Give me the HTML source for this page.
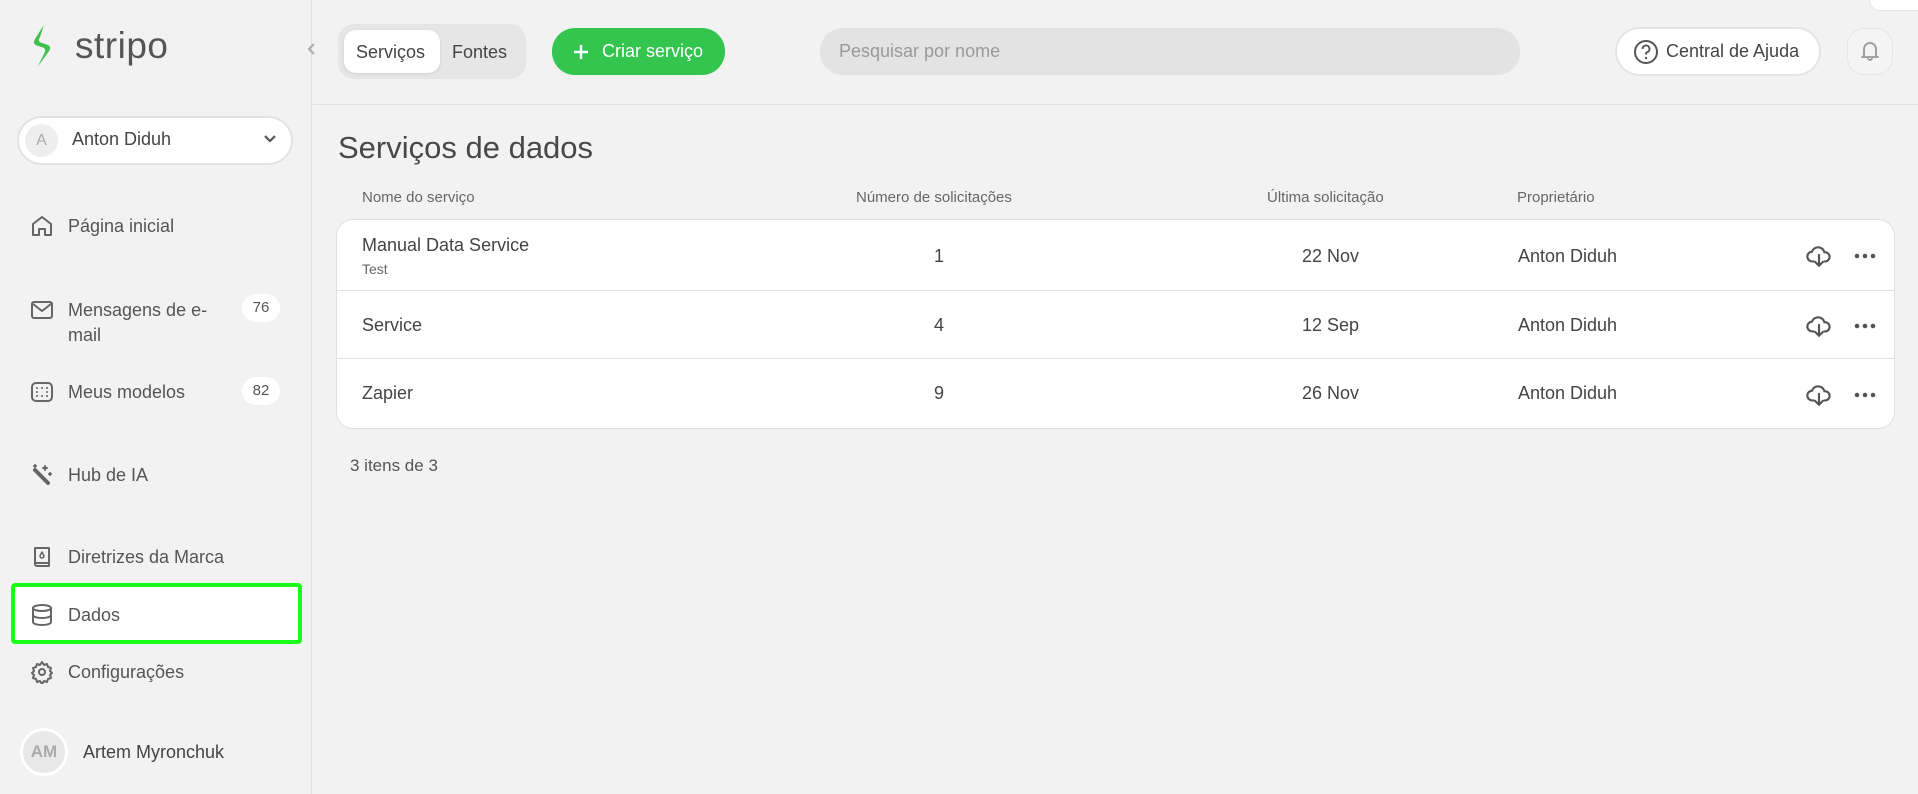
<!DOCTYPE html>
<html><head><meta charset="utf-8"><style>
*{box-sizing:border-box;margin:0;padding:0}
body{width:1918px;height:794px;background:#f2f2f2;font-family:"Liberation Sans",sans-serif;color:#505050;position:relative;overflow:hidden}
.abs{position:absolute}
.side{left:0;top:0;width:312px;height:794px;border-right:1px solid #e0e0e0}
.nav{position:absolute;left:30px;display:flex;align-items:center;font-size:18px;color:#555}
.nav svg{width:24px;height:24px;margin-right:14px;fill:none;stroke:#666;stroke-width:2;stroke-linecap:round;stroke-linejoin:round}
.badge{position:absolute;left:242px;width:38px;height:28px;border-radius:14px;background:#fff;font-size:15px;text-align:center;line-height:28px;color:#555}
.th{position:absolute;top:189px;font-size:15px;color:#666}
.row{position:absolute;left:0;right:0;font-size:18px;color:#444}
.row span{position:absolute}
</style></head><body>
<div class="abs side">
  <svg class="abs" style="left:31px;top:24px" width="22" height="44" viewBox="0 0 24 46"><path d="M14 0 L4 16 Q1 21 8 23 L14 25 Q17 27 14 32 L7 46 L20 28 Q23 23 16 21 L10 19 Q7 17 10 13 Z" fill="#3fc24c"/></svg>
  <div class="abs" style="left:75px;top:26px;font-size:37px;color:#555;letter-spacing:0.5px;line-height:40px">stripo</div>
  <div class="abs" style="left:19px;top:118px;width:272px;height:45px;border-radius:23px;background:#fff;box-shadow:0 0 0 2px #e2e2e2"></div>
  <div class="abs" style="left:25px;top:124px;width:33px;height:33px;border-radius:50%;background:#eee;color:#aaa;font-size:16px;text-align:center;line-height:33px">A</div>
  <div class="abs" style="left:72px;top:129px;font-size:18px;color:#444">Anton Diduh</div>
  <svg class="abs" style="left:263px;top:134px" width="14" height="10" viewBox="0 0 14 10"><path d="M2 2l5 5 5-5" stroke="#555" stroke-width="2.2" fill="none"/></svg>

  <div class="nav" style="top:214px"><svg viewBox="0 0 24 24"><path d="M3 21V10l9-7 9 7v11h-6v-6h-6v6z"/></svg>Página inicial</div>
  <div class="nav" style="top:298px;align-items:flex-start;line-height:25px"><svg viewBox="0 0 24 24"><rect x="2" y="4" width="20" height="16" rx="2"/><path d="M3 6l9 7 9-7"/></svg>Mensagens de e-<br>mail</div>
  <div class="badge" style="top:294px">76</div>
  <div class="nav" style="top:380px"><svg viewBox="0 0 24 24"><rect x="2" y="3" width="20" height="18" rx="4"/><path d="M7 8h.01M12 8h.01M17 8h.01M7 16h.01M12 16h.01M17 16h.01M7 12h.01M17 12h.01"/></svg>Meus modelos</div>
  <div class="badge" style="top:377px">82</div>
  <div class="nav" style="top:463px"><svg viewBox="0 0 24 24"><path d="M5 7l13 13" stroke-width="4"/><path d="M15 3v4M13 5h4M5 2v2M4 3h2M20 10v2M19 11h2"/></svg>Hub de IA</div>
  <div class="nav" style="top:545px"><svg viewBox="0 0 24 24"><path d="M5 3h14v18H7a2 2 0 0 1-2-2z"/><path d="M5 18h14"/><path d="M12 7l-2 4a2 2 0 1 0 4 0z" stroke-width="1.5"/></svg>Diretrizes da Marca</div>
  <div class="abs" style="left:11px;top:583px;width:291px;height:61px;border:4px solid #1aff1a;border-radius:4px;background:#fff"></div>
  <div class="nav" style="top:603px"><svg viewBox="0 0 24 24"><ellipse cx="12" cy="5" rx="9" ry="3"/><path d="M3 5v14c0 1.7 4 3 9 3s9-1.3 9-3V5M3 12c0 1.7 4 3 9 3s9-1.3 9-3"/></svg>Dados</div>
  <div class="nav" style="top:660px"><svg viewBox="0 0 24 24"><circle cx="12" cy="12" r="3"/><path d="M12 2l2 3 3-1 1 3 3 1-1 3 2 2-2 2 1 3-3 1-1 3-3-1-2 3-2-3-3 1-1-3-3-1 1-3-2-2 2-2-1-3 3-1 1-3 3 1z"/></svg>Configurações</div>
  <div class="abs" style="left:20px;top:728px;width:48px;height:48px;border-radius:50%;background:#e8e8e8;border:3px solid #fff;color:#aaa;font-size:17px;font-weight:bold;text-align:center;line-height:42px">AM</div>
  <div class="abs" style="left:83px;top:742px;font-size:18px;color:#444">Artem Myronchuk</div>
</div>
<svg class="abs" style="left:306px;top:42px" width="10" height="14" viewBox="0 0 10 14"><path d="M8 2L3 7l5 5" stroke="#aaa" stroke-width="2" fill="none"/></svg>

<div class="abs" style="left:313px;top:104px;width:1605px;height:1px;background:#e0e0e0"></div>
<div class="abs" style="left:338px;top:24px;width:188px;height:55px;border-radius:16px;background:#e6e6e6"></div>
<div class="abs" style="left:344px;top:30px;width:96px;height:43px;border-radius:12px;background:#fff;box-shadow:0 1px 3px rgba(0,0,0,.1)"></div>
<div class="abs" style="left:356px;top:42px;font-size:18px;color:#444">Serviços</div>
<div class="abs" style="left:452px;top:42px;font-size:18px;color:#444">Fontes</div>
<div class="abs" style="left:552px;top:28px;width:173px;height:47px;border-radius:23px;background:#33c54e;color:#fff;font-size:18px;line-height:47px;padding-left:50px;white-space:nowrap">Criar serviço</div>
<svg class="abs" style="left:574px;top:45px" width="14" height="14"><path d="M7 0v14M0 7h14" stroke="#fff" stroke-width="2.4"/></svg>
<div class="abs" style="left:820px;top:28px;width:700px;height:47px;border-radius:23px;background:#e3e3e3;color:#999;font-size:18px;line-height:47px;padding-left:19px">Pesquisar por nome</div>
<div class="abs" style="left:1617px;top:29px;width:202px;height:45px;border-radius:23px;background:#fff;box-shadow:0 0 0 2px #e4e4e4"></div>
<svg class="abs" style="left:1633px;top:39px" width="26" height="26" viewBox="0 0 26 26"><circle cx="13" cy="13" r="11" stroke="#555" stroke-width="2" fill="none"/><path d="M9.5 10a3.5 3.5 0 1 1 4.5 3.3c-.7.3-1 .8-1 1.5v.7" stroke="#555" stroke-width="2" fill="none"/><circle cx="13" cy="19" r="1.2" fill="#555"/></svg>
<div class="abs" style="left:1666px;top:41px;font-size:18px;color:#444">Central de Ajuda</div>
<div class="abs" style="left:1848px;top:29px;width:44px;height:45px;border-radius:16px;background:#f4f4f4;box-shadow:0 0 0 1px #e6e6e6"></div>
<svg class="abs" style="left:1860px;top:40px" width="20" height="22" viewBox="0 0 20 22"><path d="M4 16V9a6 6 0 0 1 12 0v7l2 1H2z M8 18a2 2 0 0 0 4 0" stroke="#999" stroke-width="1.8" fill="none" stroke-linejoin="round"/></svg>
<div class="abs" style="left:1870px;top:-10px;width:60px;height:20px;border-radius:10px;background:#fff;box-shadow:0 0 0 1px #e4e4e4"></div>

<div class="abs" style="left:338px;top:130px;font-size:31px;color:#484848">Serviços de dados</div>
<div class="th" style="left:362px">Nome do serviço</div>
<div class="th" style="left:856px">Número de solicitações</div>
<div class="th" style="left:1267px">Última solicitação</div>
<div class="th" style="left:1517px">Proprietário</div>

<div class="abs" style="left:337px;top:220px;width:1557px;height:208px;background:#fff;border-radius:16px;box-shadow:0 0 0 1px #e0e0e0">
  <div class="row" style="top:0;height:71px;border-bottom:1px solid #e2e2e2">
    <span style="left:25px;top:15px">Manual Data Service</span><span style="left:25px;top:41px;font-size:14px;color:#666">Test</span>
    <span style="left:597px;top:26px">1</span><span style="left:965px;top:26px">22 Nov</span><span style="left:1181px;top:26px">Anton Diduh</span>
  </div>
  <div class="row" style="top:71px;height:68px;border-bottom:1px solid #e2e2e2">
    <span style="left:25px;top:24px">Service</span><span style="left:597px;top:24px">4</span><span style="left:965px;top:24px">12 Sep</span><span style="left:1181px;top:24px">Anton Diduh</span>
  </div>
  <div class="row" style="top:139px;height:69px">
    <span style="left:25px;top:24px">Zapier</span><span style="left:597px;top:24px">9</span><span style="left:965px;top:24px">26 Nov</span><span style="left:1181px;top:24px">Anton Diduh</span>
  </div>
</div>
<svg width="0" height="0" style="position:absolute"><defs><g id="cl"><path d="M7 17H6a4.5 4.5 0 0 1-.5-9A6 6 0 0 1 17 8.5a4 4 0 0 1 1 8.5h-1" stroke="#555" stroke-width="2" fill="none" stroke-linecap="round"/><path d="M12 11v10M8.5 17.5l3.5 3.5 3.5-3.5" stroke="#555" stroke-width="2" fill="none" stroke-linecap="round"/></g><g id="dt"><circle cx="3" cy="3" r="2.3" fill="#555"/><circle cx="11" cy="3" r="2.3" fill="#555"/><circle cx="19" cy="3" r="2.3" fill="#555"/></g></defs></svg>
<svg class="abs" style="left:1806px;top:243px" width="26" height="26" viewBox="0 0 24 24"><use href="#cl"/></svg>
<svg class="abs" style="left:1806px;top:313px" width="26" height="26" viewBox="0 0 24 24"><use href="#cl"/></svg>
<svg class="abs" style="left:1806px;top:382px" width="26" height="26" viewBox="0 0 24 24"><use href="#cl"/></svg>
<svg class="abs" style="left:1854px;top:253px" width="24" height="6"><use href="#dt"/></svg>
<svg class="abs" style="left:1854px;top:323px" width="24" height="6"><use href="#dt"/></svg>
<svg class="abs" style="left:1854px;top:392px" width="24" height="6"><use href="#dt"/></svg>

<div class="abs" style="left:350px;top:456px;font-size:17px;color:#555">3 itens de 3</div>
</body></html>
